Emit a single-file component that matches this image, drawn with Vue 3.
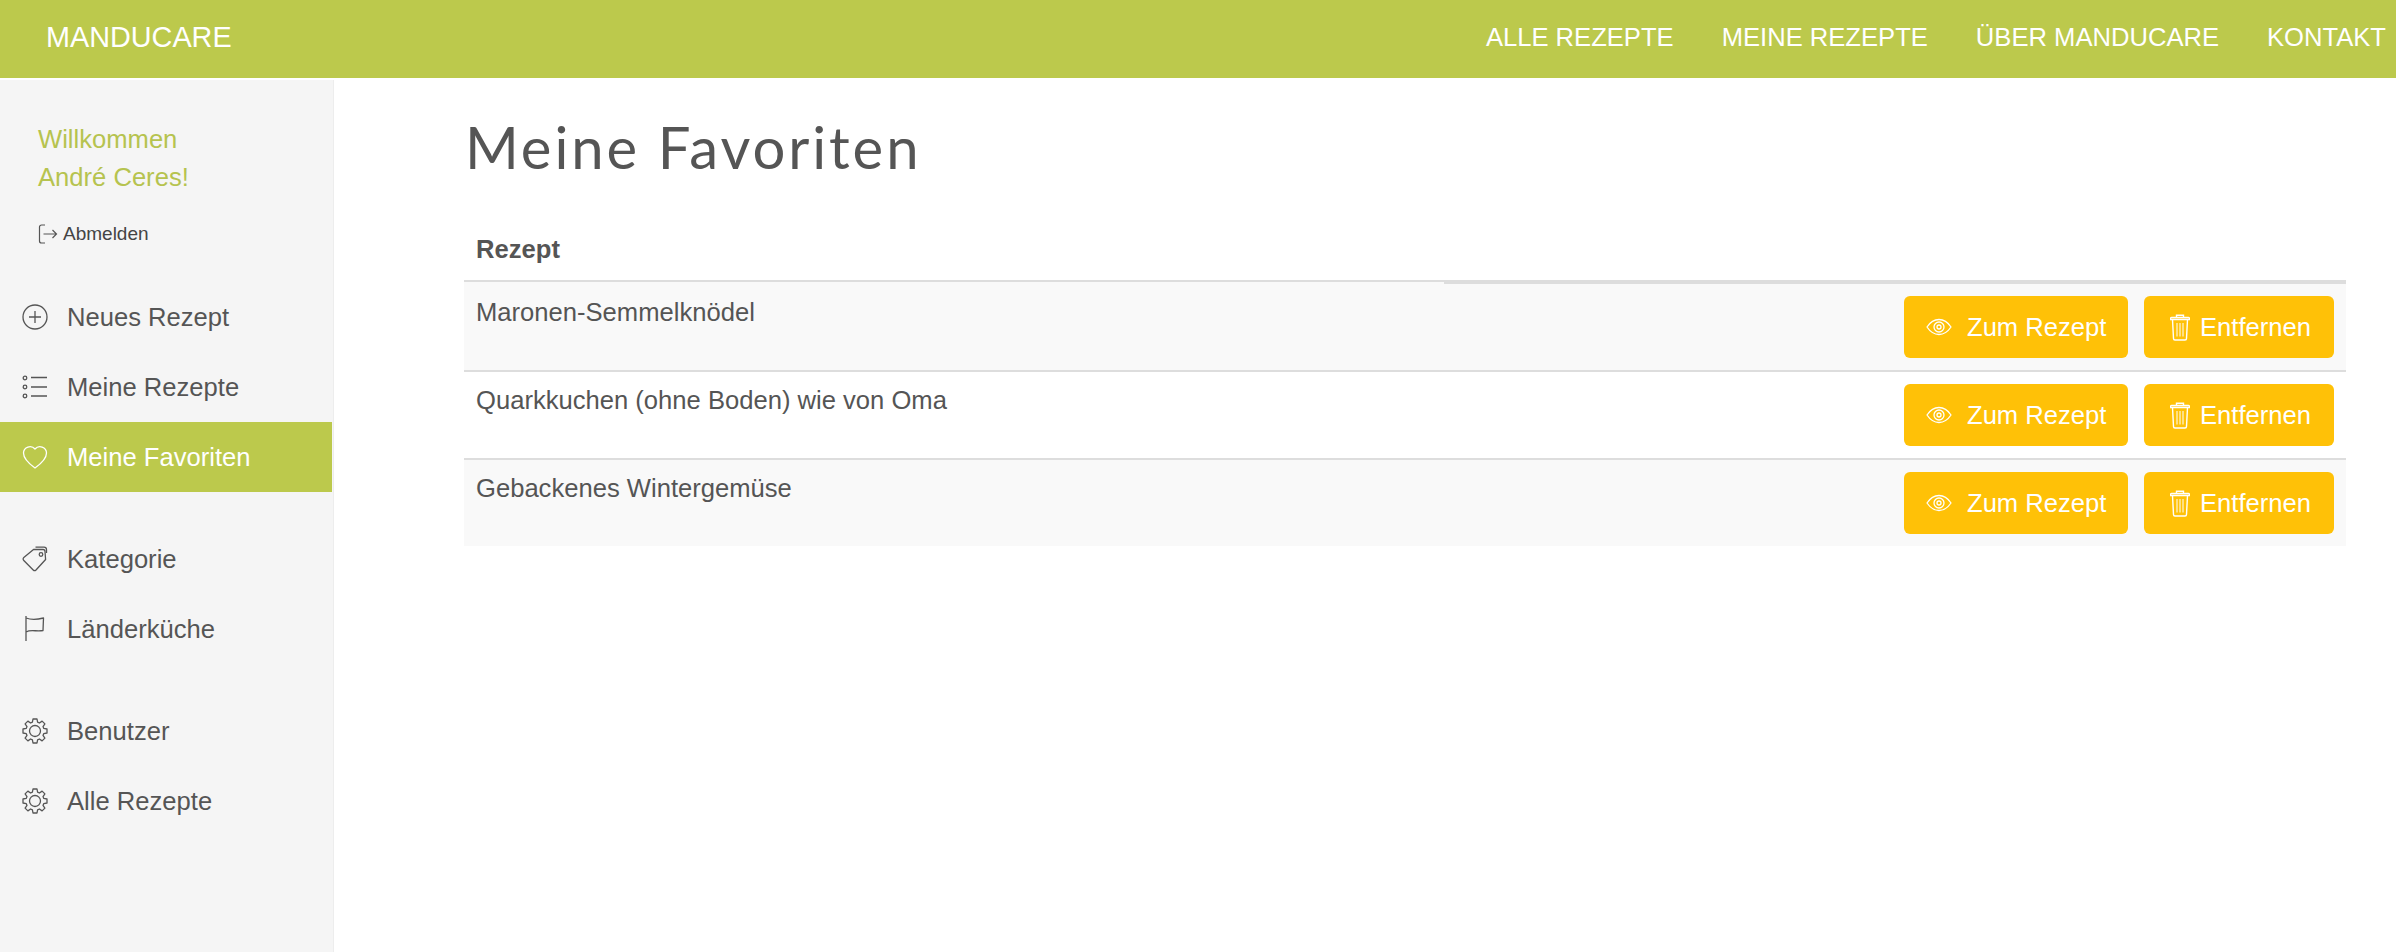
<template>
  <div class="page">
    <header class="topbar">
      <a class="brand">MANDUCARE</a>
      <nav class="topnav">
        <a v-for="link in topLinks" :key="link">{{ link }}</a>
      </nav>
    </header>

    <div class="body">
      <aside class="sidebar">
        <div class="welcome">
          <p>Willkommen</p>
          <p>André Ceres!</p>
        </div>
        <a class="logout">
          <svg viewBox="0 0 20 20" width="20" height="20" fill="none" stroke="#555" stroke-width="1.2">
            <path d="M7 1H3.500a2 2 0 0 0-2 2v14a2 2 0 0 0 2 2H7" />
            <path d="M5.500 10H18.500M14.500 6l4 4-4 4" />
          </svg>
          Abmelden
        </a>

        <ul v-for="(group, i) in menu" :key="i" class="menu">
          <li v-for="item in group" :key="item.label" :class="{ active: item.active }">
            <svg viewBox="0 0 26 26" width="26" height="26" fill="none" stroke="currentColor" stroke-width="1.300" stroke-linejoin="round" v-html="icons[item.icon]"></svg>
            <span>{{ item.label }}</span>
          </li>
        </ul>
      </aside>

      <main class="content">
        <h1>Meine Favoriten</h1>
        <div class="table">
          <div class="thead">
            <div class="th-name">Rezept</div>
            <div class="th-actions"></div>
          </div>
          <div v-for="recipe in recipes" :key="recipe" class="row">
            <div class="name">{{ recipe }}</div>
            <div class="actions">
              <button class="open">
                <svg viewBox="0 0 26 18" width="26" height="18" fill="none" stroke="#fff" stroke-width="1.300">
                  <path d="M1 9c3-4.500 7-7.500 12-7.500S22 4.500 25 9c-3 4.500-7 7.500-12 7.500S4 13.500 1 9Z" />
                  <circle cx="13" cy="9" r="5" />
                  <circle cx="13" cy="9" r="2" />
                </svg>
                Zum Rezept
              </button>
              <button class="remove">
                <svg viewBox="0 0 20 27" width="20" height="27" fill="none" stroke="#fff" stroke-width="1.400">
                  <path d="M.5 5.500h19v-1a1 1 0 0 0-1-1h-17a1 1 0 0 0-1 1ZM6.500 3.500V1.200h7v2.300" />
                  <path d="M2.500 5.500 3.500 24.500a1.500 1.500 0 0 0 1.500 1.500h10a1.500 1.500 0 0 0 1.500-1.500l1-19" />
                  <path d="M7 9v13.500M10 9v13.500M13 9v13.500" stroke-width="1" />
                </svg>
                Entfernen
              </button>
            </div>
          </div>
        </div>
      </main>
    </div>
  </div>
</template>

<script setup>
const topLinks = ['ALLE REZEPTE', 'MEINE REZEPTE', 'ÜBER MANDUCARE', 'KONTAKT']

const recipes = ['Maronen-Semmelknödel', 'Quarkkuchen (ohne Boden) wie von Oma', 'Gebackenes Wintergemüse']

const menu = [
  [
    { label: 'Neues Rezept', icon: 'plus' },
    { label: 'Meine Rezepte', icon: 'list' },
    { label: 'Meine Favoriten', icon: 'heart', active: true },
  ],
  [
    { label: 'Kategorie', icon: 'tag' },
    { label: 'Länderküche', icon: 'flag' },
  ],
  [
    { label: 'Benutzer', icon: 'gear' },
    { label: 'Alle Rezepte', icon: 'gear' },
  ],
]

const gear = 'M11 1h4l.6 3.200 1.800.8 2.700-1.900 2.800 2.800-1.900 2.700.8 1.800 3.200.6v4l-3.200.6-.8 1.800 1.900 2.700-2.800 2.800-2.700-1.900-1.800.8L15 25h-4l-.6-3.200-1.800-.8-2.700 1.900-2.800-2.800 1.900-2.700-.8-1.800L1 15v-4l3.200-.6.8-1.800-1.900-2.700 2.800-2.800 2.700 1.900 1.800-.8Z'

const icons = {
  plus: '<circle cx="13" cy="13" r="12"/><path d="M13 7v12M7 13h12"/>',
  list: '<circle cx="3" cy="4" r="1.800"/><circle cx="3" cy="13" r="1.800"/><circle cx="3" cy="22" r="1.800"/><path d="M9 3.500h16M9 13h16M9 22h16"/>',
  heart: '<path d="M13 24C6 19 1.500 14.500 1.500 9A6.500 6.500 0 0 1 13 5a6.500 6.500 0 0 1 11.500 4C24.500 14.500 20 19 13 24Z"/>',
  tag: '<path d="M1.800 11.500 11.500 3.500H21a2 2 0 0 1 2 2l.6 8L14 24a2 2 0 0 1-2.800 0l-9.400-9.500a2 2 0 0 1 0-3Z"/><circle cx="19" cy="8.500" r="1.800"/><path d="M13.500 1.200H22a2.500 2.500 0 0 1 2.500 2.500V7"/>',
  flag: '<path d="M4 0v25M4 2C9 4 14 4 21.500 2L21 14.500C15 16 9 13 4 16"/>',
  gear: '<path d="' + gear + '"/><circle cx="13" cy="13" r="5.500"/>',
}
</script>

<style>
html, body {
  margin: 0;
  background: #fff;
}
</style>

<style scoped>
.page {
  height: 952px;
  display: flex;
  flex-direction: column;
  font-family: "Liberation Sans", Arial, sans-serif;
  color: #555;
  overflow: hidden;
}
.topbar {
  height: 78px;
  flex: none;
  background: #bcc94c;
  color: #fff;
  display: flex;
  justify-content: space-between;
  align-items: center;
  padding: 0 10px 4px 46px;
  box-sizing: border-box;
}
.brand {
  font-size: 28.800px;
}
.topnav {
  display: flex;
  gap: 48px;
  font-size: 25.600px;
}
.body {
  flex: 1;
  display: flex;
}
.sidebar {
  width: 334px;
  flex: none;
  box-sizing: border-box;
  background: #f5f5f5;
  border-right: 1px solid #ededed;
  margin-top: 2px;
  padding-top: 40px;
  font-size: 25.600px;
}
.welcome {
  color: #b6c34f;
  padding-left: 38px;
}
.welcome p {
  margin: 0;
  line-height: 38px;
}
.logout {
  display: flex;
  align-items: center;
  gap: 5px;
  margin: 24px 0 34px 38px;
  font-size: 19px;
  height: 28px;
  color: #444;
}
.menu {
  list-style: none;
  margin: 0 0 32px;
  padding: 0;
}
.menu li {
  height: 70px;
  display: flex;
  align-items: center;
  gap: 19px;
  padding-left: 22px;
  margin-right: 1px;
}
.menu li.active {
  background: #bcc94c;
  color: #fff;
}
.content {
  flex: 1;
  padding: 0 50px 0 130px;
}
h1 {
  margin: 0;
  padding: 34px 0 0 1px;
  font-family: Lato, sans-serif;
  font-weight: 400;
  font-size: 58px;
  line-height: 70px;
  color: #555;
  letter-spacing: 2.900px;
}
.table {
  margin-top: 50px;
  font-size: 25.600px;
}
.thead {
  display: flex;
  height: 50px;
  margin-bottom: -2px;
  position: relative;
  font-weight: 700;
  line-height: 34px;
}
.th-name {
  width: 980px;
  height: 48px;
  padding-left: 12px;
  box-sizing: border-box;
  box-shadow: 0 2px 0 #ddd;
}
.th-actions {
  flex: 1;
  height: 52px;
  box-sizing: border-box;
  border-bottom: 4px solid #ddd;
}
.row {
  display: flex;
  justify-content: space-between;
  height: 88px;
  border-top: 2px solid #ddd;
  box-sizing: border-box;
  padding: 12px 12px 0 12px;
}
.thead + .row {
  height: 90px;
  padding-top: 14px;
  border-top-color: transparent;
}
.row:nth-child(even) {
  background: #f9f9f9;
}
.name {
  margin-top: 2px;
}
.actions {
  display: flex;
  gap: 16px;
}
button {
  height: 62px;
  border: 0;
  border-radius: 6px;
  background: #ffc107;
  color: #fff;
  font: inherit;
  display: flex;
  align-items: center;
  padding: 0;
}
.open {
  width: 224px;
  gap: 15px;
  padding-left: 22px;
}
.remove {
  width: 190px;
  gap: 10px;
  padding-left: 26px;
}
</style>
